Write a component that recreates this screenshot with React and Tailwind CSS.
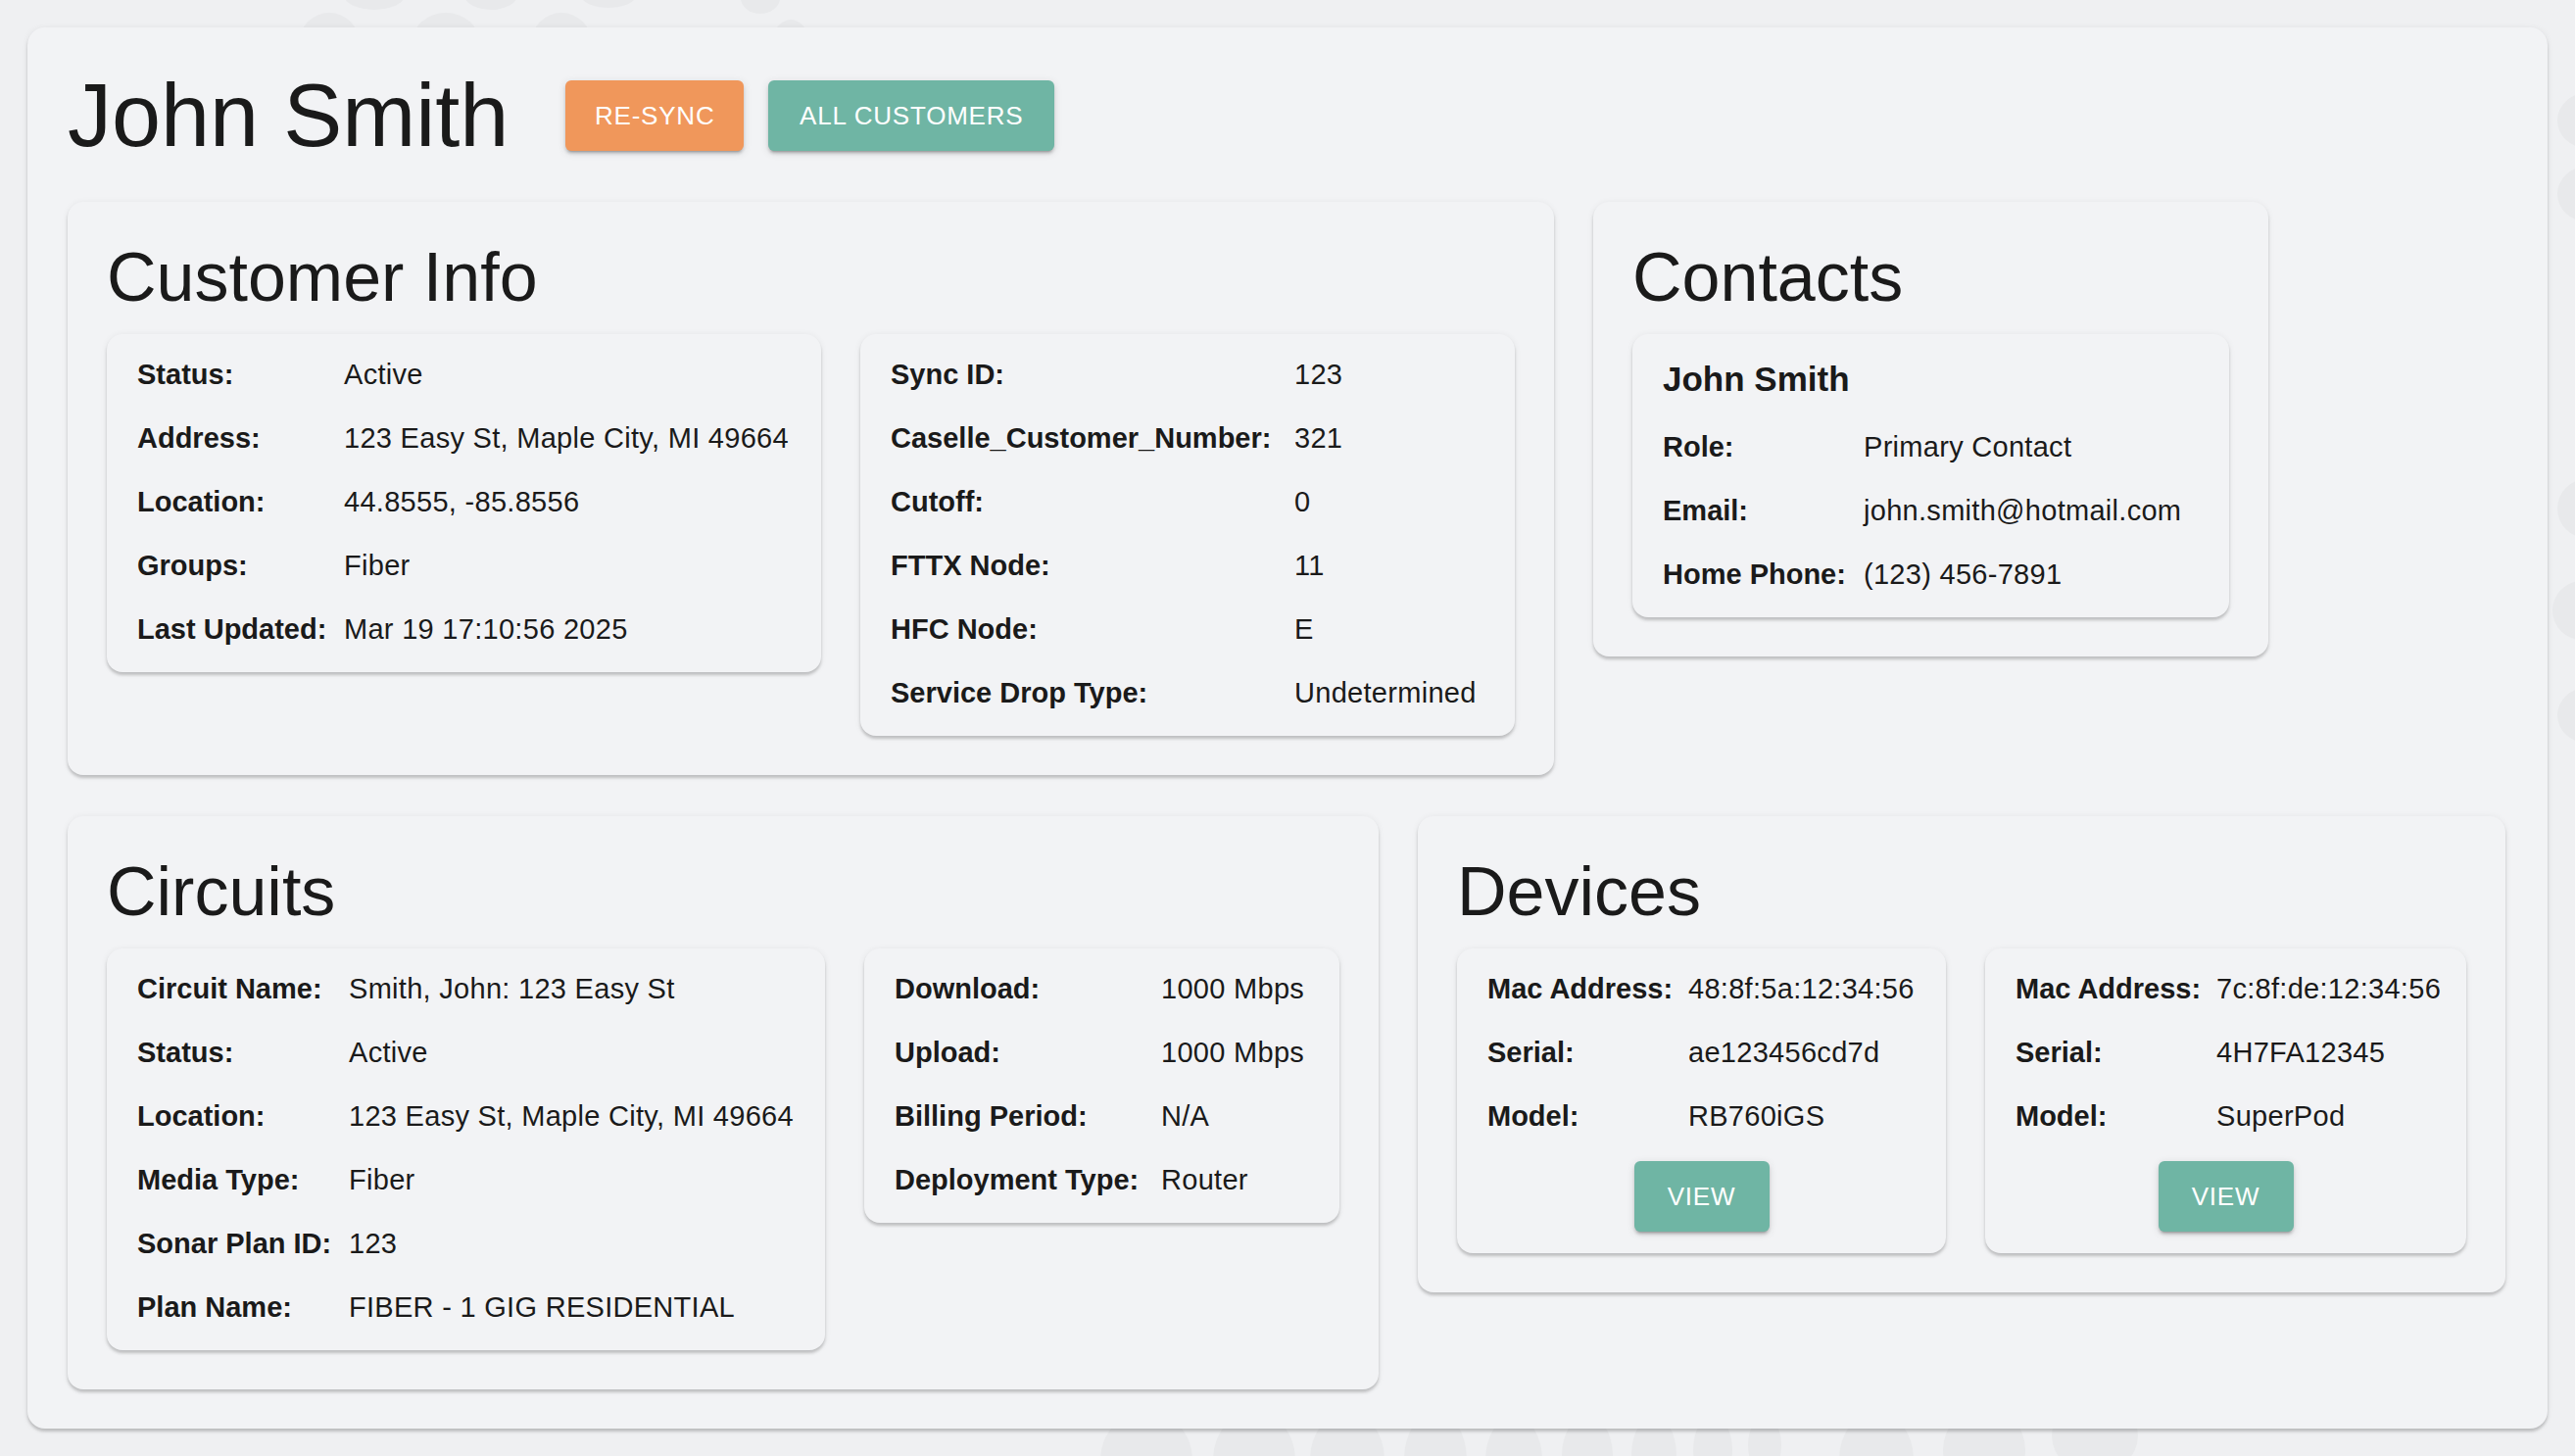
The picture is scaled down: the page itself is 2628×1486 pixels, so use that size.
import { Fragment } from 'react'

const customerInfo = [
  ['Status:', 'Active'],
  ['Address:', '123 Easy St, Maple City, MI 49664'],
  ['Location:', '44.8555, -85.8556'],
  ['Groups:', 'Fiber'],
  ['Last Updated:', 'Mar 19 17:10:56 2025'],
]

const syncInfo = [
  ['Sync ID:', '123'],
  ['Caselle_Customer_Number:', '321'],
  ['Cutoff:', '0'],
  ['FTTX Node:', '11'],
  ['HFC Node:', 'E'],
  ['Service Drop Type:', 'Undetermined'],
]

const contactRows = [
  ['Role:', 'Primary Contact'],
  ['Email:', 'john.smith@hotmail.com'],
  ['Home Phone:', '(123) 456-7891'],
]

const circuitRows = [
  ['Circuit Name:', 'Smith, John: 123 Easy St'],
  ['Status:', 'Active'],
  ['Location:', '123 Easy St, Maple City, MI 49664'],
  ['Media Type:', 'Fiber'],
  ['Sonar Plan ID:', '123'],
  ['Plan Name:', 'FIBER - 1 GIG RESIDENTIAL'],
]

const speedRows = [
  ['Download:', '1000 Mbps'],
  ['Upload:', '1000 Mbps'],
  ['Billing Period:', 'N/A'],
  ['Deployment Type:', 'Router'],
]

const devices = [
  { mac: '48:8f:5a:12:34:56', serial: 'ae123456cd7d', model: 'RB760iGS', w: 'w-[499px]' },
  { mac: '7c:8f:de:12:34:56', serial: '4H7FA12345', model: 'SuperPod', w: 'w-[491px]' },
]

// faint blobs of the page background pattern (cx, cy, rx, ry)
const blobs = [
  [382, -5, 31, 15], [501, -5, 27, 15], [621, -5, 28, 13], [776, -2, 20, 16],
  [336, 45, 31, 32], [455, 45, 35, 32], [573, 45, 31, 32], [807, 45, 19, 25],
  [1170, 1490, 47, 50], [1280, 1490, 42, 50], [1375, 1490, 38, 50], [1465, 1490, 32, 50],
  [1545, 1490, 29, 45], [1620, 1485, 26, 40], [1688, 1485, 23, 40], [1748, 1480, 20, 35],
  [1801, 1475, 17, 30], [1915, 1490, 38, 50], [2025, 1480, 42, 45], [2138, 1465, 44, 40],
  [2640, 123, 30, 28], [2640, 198, 30, 28], [2640, 519, 30, 30], [2635, 623, 30, 30], [2640, 730, 30, 28],
]

const cardShadow = 'shadow-[0_3px_3px_rgba(0,0,0,0.18),0_1px_7px_rgba(0,0,0,0.07)]'
const btnShadow = 'shadow-[0_4px_2px_-3px_rgba(0,0,0,0.2),0_3px_3px_rgba(0,0,0,0.14),0_2px_8px_rgba(0,0,0,0.12)]'

function Rows({ rows, cols }) {
  return (
    <div className={`grid ${cols}`}>
      {rows.map(([k, v]) => (
        <Fragment key={k}>
          <div className="h-[65px] leading-[65px] font-bold whitespace-nowrap">{k}</div>
          <div className="h-[65px] leading-[65px] whitespace-nowrap tracking-[0.01em]">{v}</div>
        </Fragment>
      ))}
    </div>
  )
}

function Box({ className, children }) {
  return (
    <div className={`rounded-[16px] bg-[#f2f3f5] pt-[9px] pb-[11px] pl-[31px] pr-[30px] ${cardShadow} ${className}`}>
      {children}
    </div>
  )
}

function Card({ title, children }) {
  return (
    <div className={`rounded-[16px] bg-[#f2f3f5] px-[40px] pt-[42px] pb-[40px] ${cardShadow}`}>
      <h2 className="text-[70px] leading-[70px] mb-[23px] whitespace-nowrap">{title}</h2>
      <div className="flex items-start gap-[40px]">{children}</div>
    </div>
  )
}

function Button({ children, color, width }) {
  return (
    <button className={`${color} ${width} h-[72px] rounded-[6px] text-white text-[26px] uppercase tracking-[0.03em] ${btnShadow}`}>
      {children}
    </button>
  )
}

export default function App() {
  return (
    <div className="relative min-h-screen overflow-hidden bg-[#eff0f2] px-[28px] pt-[28px] pb-[30px] font-['Liberation_Sans',Arial,sans-serif] text-[29px] text-[#1a1a1a]">
      <svg className="absolute inset-0 h-full w-full" aria-hidden="true">
        {blobs.map(([cx, cy, rx, ry], i) => (
          <ellipse key={i} cx={cx} cy={cy} rx={rx} ry={ry} fill="#e8e9eb" />
        ))}
      </svg>
      <div className={`relative rounded-[18px] bg-[#f2f3f5] pl-[41px] pr-[40px] pt-[45px] pb-[40px] ${cardShadow}`}>
        <div className="flex items-center mb-[43px]">
          <h1 className="text-[90px] leading-[90px] mr-[58px] whitespace-nowrap">John Smith</h1>
          <div className="flex gap-[25px]">
            <Button color="bg-[#f0975b]" width="w-[182px]">Re-Sync</Button>
            <Button color="bg-[#6fb5a4]" width="w-[292px]">All Customers</Button>
          </div>
        </div>

        <div className="flex items-start gap-[40px]">
          <Card title="Customer Info">
            <Box className="w-[729px]">
              <Rows rows={customerInfo} cols="grid-cols-[211px_1fr]" />
            </Box>
            <Box className="w-[668px]">
              <Rows rows={syncInfo} cols="grid-cols-[412px_1fr]" />
            </Box>
          </Card>
          <Card title="Contacts">
            <Box className="w-[609px]">
              <div className="h-[74px] leading-[74px] text-[35px] font-bold">John Smith</div>
              <Rows rows={contactRows} cols="grid-cols-[205px_1fr]" />
            </Box>
          </Card>
        </div>

        <div className="mt-[42px] flex items-start gap-[40px]">
          <Card title="Circuits">
            <Box className="w-[733px]">
              <Rows rows={circuitRows} cols="grid-cols-[216px_1fr]" />
            </Box>
            <Box className="w-[485px]">
              <Rows rows={speedRows} cols="grid-cols-[272px_1fr]" />
            </Box>
          </Card>
          <Card title="Devices">
            {devices.map(d => (
              <Box key={d.mac} className={`${d.w} pb-[22px]`}>
                <Rows
                  rows={[['Mac Address:', d.mac], ['Serial:', d.serial], ['Model:', d.model]]}
                  cols="grid-cols-[205px_1fr]"
                />
                <div className="mt-[13px] flex justify-center pr-[1px]">
                  <Button color="bg-[#6fb5a4]" width="w-[138px]">View</Button>
                </div>
              </Box>
            ))}
          </Card>
        </div>
      </div>
    </div>
  )
}
